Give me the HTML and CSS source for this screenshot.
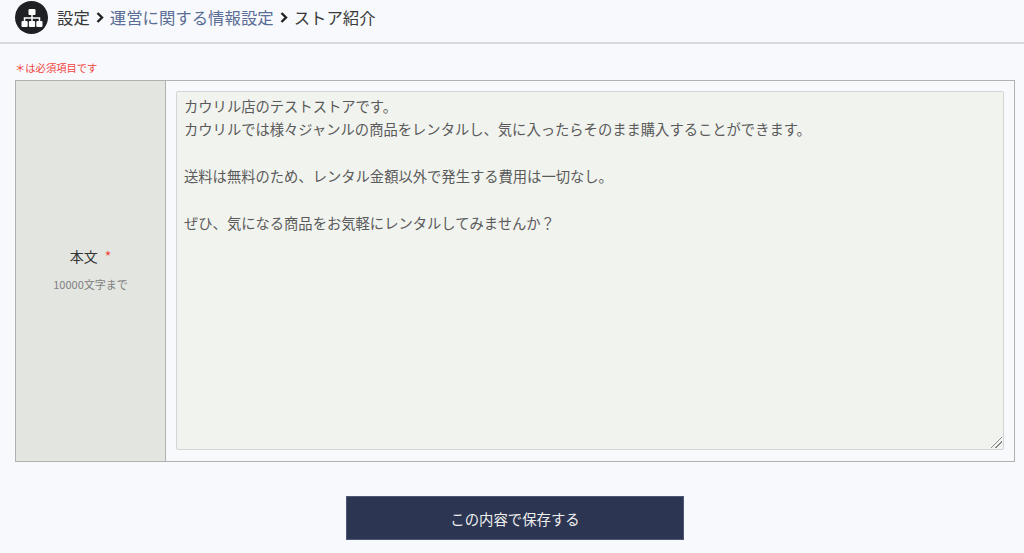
FILE: index.html
```html
<!DOCTYPE html>
<html lang="ja">
<head>
  <meta charset="UTF-8">
  <title>ストア紹介</title>
  <link rel="stylesheet" href="styles.css">
</head>
<body>
  <header class="breadcrumb">
    <span class="breadcrumb-icon">
      <svg width="22" height="20" viewBox="0 0 22 20">
        <rect x="7.5" y="1" width="7" height="6" rx="1" fill="#fff"/>
        <path d="M11 7v6M3.5 13v-3h15v3" fill="none" stroke="#fff" stroke-width="1.5"/>
        <rect x="0.5" y="13" width="6.2" height="6" rx="1" fill="#fff"/>
        <rect x="7.9" y="13" width="6.2" height="6" rx="1" fill="#fff"/>
        <rect x="15.3" y="13" width="6.2" height="6" rx="1" fill="#fff"/>
      </svg>
    </span>
    <span class="crumb">設定</span>
    <svg class="chevron" width="8" height="11" viewBox="0 0 8 11"><path d="M1.5 1l4.5 4.5-4.5 4.5" fill="none" stroke="#222" stroke-width="2.4"/></svg>
    <a class="crumb breadcrumb-link" href="#">運営に関する情報設定</a>
    <svg class="chevron" width="8" height="11" viewBox="0 0 8 11"><path d="M1.5 1l4.5 4.5-4.5 4.5" fill="none" stroke="#222" stroke-width="2.4"/></svg>
    <span class="crumb">ストア紹介</span>
  </header>

  <main class="content">
    <p class="required-note">＊は必須項目です</p>
    <div class="form-row">
      <div class="form-label">
        <div class="label-title">本文<span class="required-mark">*</span></div>
        <div class="label-sub">10000文字まで</div>
      </div>
      <div class="form-field">
        <textarea class="body-input">カウリル店のテストストアです。
カウリルでは様々ジャンルの商品をレンタルし、気に入ったらそのまま購入することができます。

送料は無料のため、レンタル金額以外で発生する費用は一切なし。

ぜひ、気になる商品をお気軽にレンタルしてみませんか？</textarea>
      </div>
    </div>
    <div class="form-actions">
      <button class="save-button" type="button">この内容で保存する</button>
    </div>
  </main>
</body>
</html>
```

FILE: styles.css
```css
* {
  box-sizing: border-box;
}
body {
  margin: 0;
  background: #f8f9fc;
  color: #333;
  font-family: "Noto Sans CJK JP", "Noto Sans", sans-serif;
}
.breadcrumb {
  display: flex;
  align-items: center;
  height: 44px;
  padding: 0 0 7px 15px;
  border-bottom: 2px solid #d8d9dc;
  font-size: 16.4px;
  color: #3a3a3a;
}
.breadcrumb-icon {
  display: flex;
  align-items: center;
  justify-content: center;
  width: 33px;
  height: 33px;
  margin-right: 9px;
  border-radius: 50%;
  background: #1e2024;
}
.crumb {
  margin-bottom: 2px;
}
.chevron {
  margin: 0 6px;
}
.breadcrumb-link {
  color: #5a6d96;
  text-decoration: none;
}
.content {
  padding: 0 9px 0 15px;
}
.required-note {
  margin: 0;
  padding-top: 16px;
  height: 36px;
  font-size: 10.3px;
  line-height: 15px;
  color: #f0443c;
}
.form-row {
  display: flex;
  height: 382px;
  border: 1px solid #b0b2af;
}
.form-label {
  display: flex;
  flex-direction: column;
  align-items: center;
  justify-content: center;
  width: 150px;
  padding-bottom: 5px;
  border-right: 1px solid #b0b2af;
  background: #e3e5e0;
}
.label-title {
  font-size: 14px;
  line-height: 20px;
  color: #333;
}
.required-mark {
  margin-left: 7px;
  color: #f0443c;
}
.label-sub {
  margin-top: 10px;
  font-size: 11px;
  line-height: 16px;
  color: #808080;
}
.form-field {
  flex: 1;
  padding: 10px 10px 11px 10px;
}
.body-input {
  display: block;
  width: 100%;
  height: 100%;
  padding: 2px 7px;
  border: 1px solid #d3d5d9;
  border-radius: 2px;
  background: #f1f3ee;
  color: #5a5a5a;
  font-family: inherit;
  font-size: 14.3px;
  line-height: 23.4px;
}
.body-input::-webkit-resizer {
  background: linear-gradient(135deg,
    transparent 46%, #888 46%, #888 54%,
    transparent 54%, transparent 68%, #888 68%, #888 76%,
    transparent 76%) no-repeat right 1px bottom 1px / 11px 11px;
}
.form-actions {
  display: flex;
  justify-content: center;
  padding-top: 34px;
}
.save-button {
  width: 338px;
  height: 44px;
  border: 1px solid #4b5878;
  background: #2c3551;
  color: #eee;
  font-family: inherit;
  font-size: 14.4px;
}
```
